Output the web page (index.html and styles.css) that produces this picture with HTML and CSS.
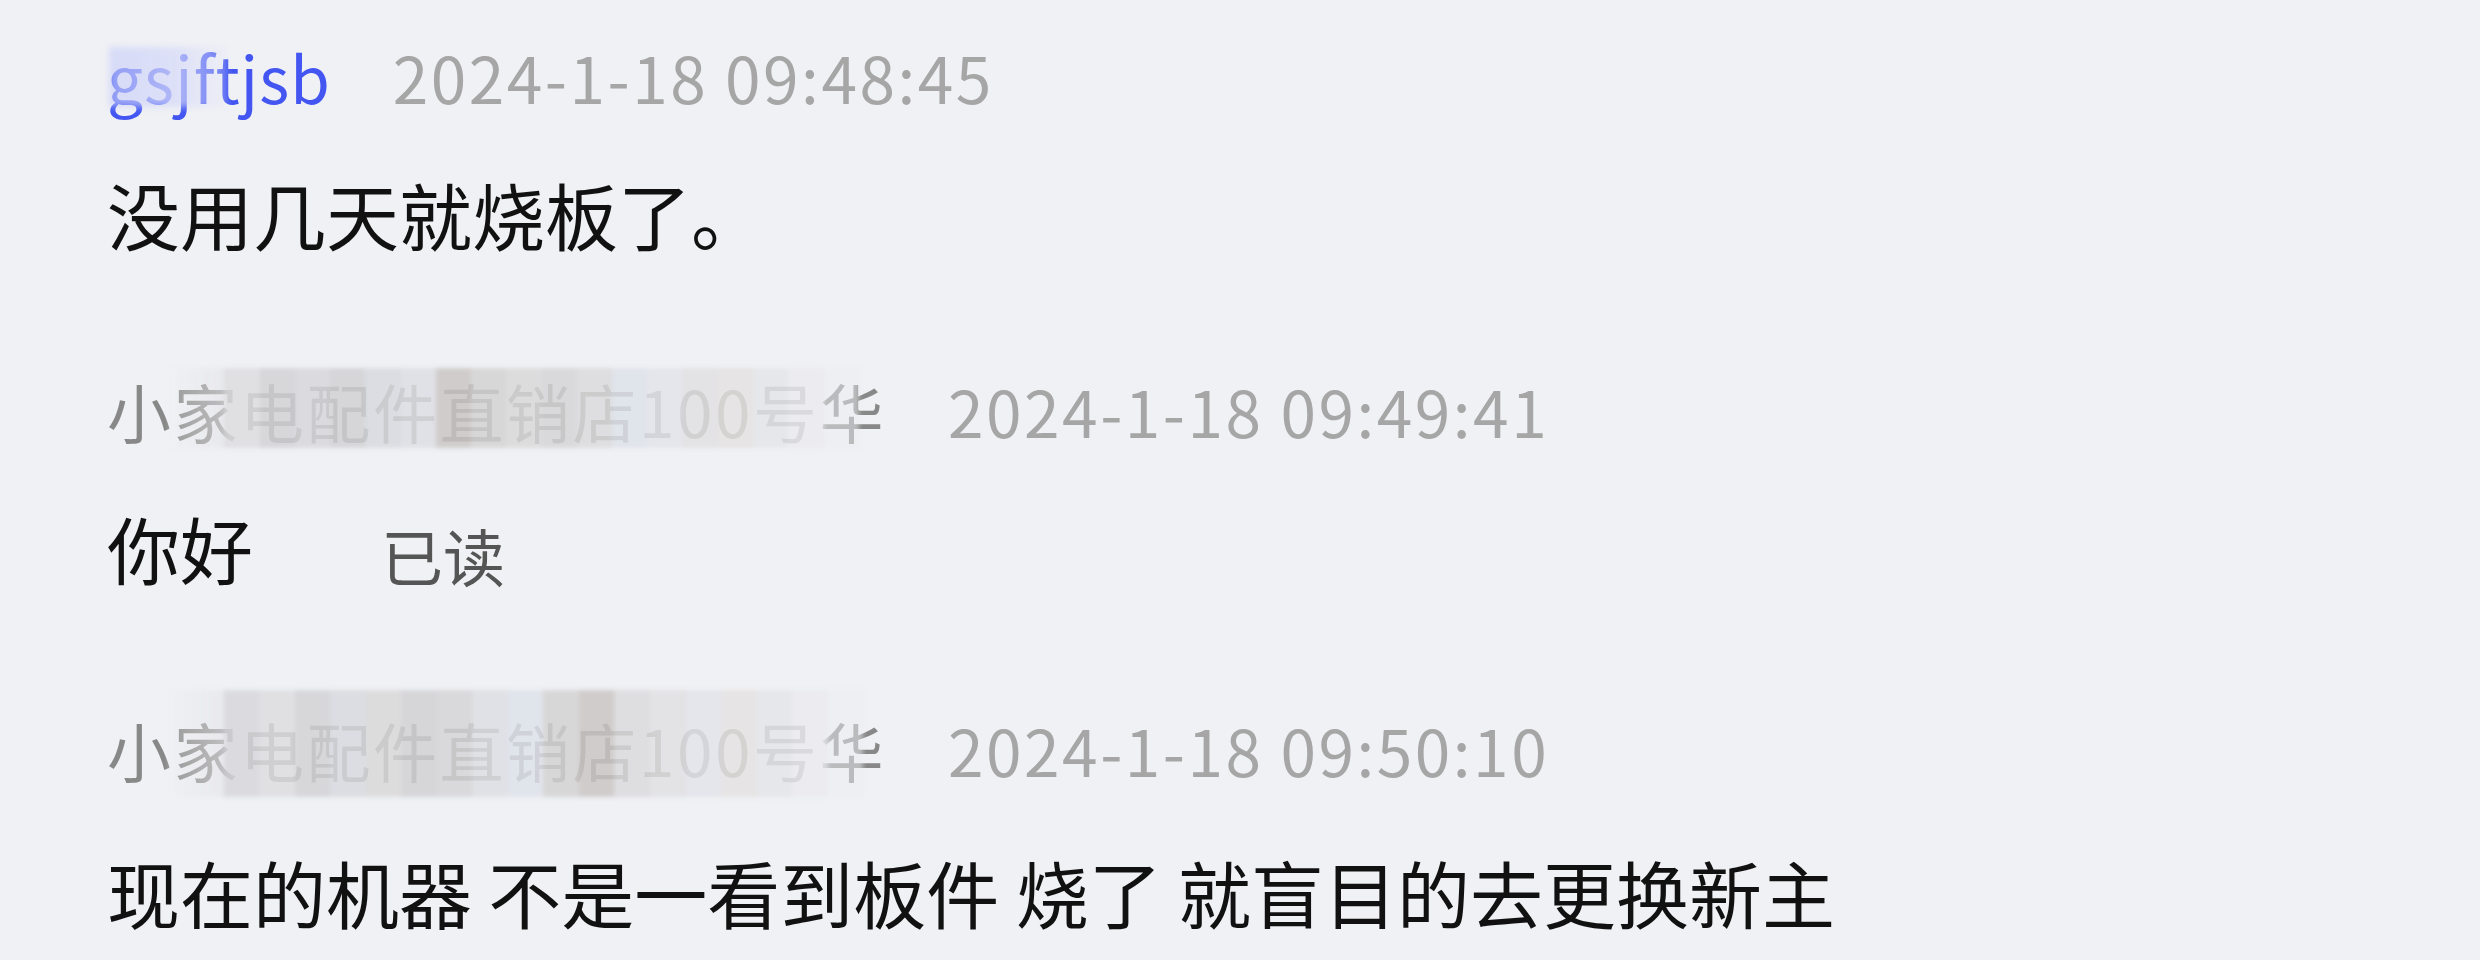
FILE: index.html
```html
<!DOCTYPE html>
<html lang="zh-CN">
<head>
<meta charset="utf-8">
<title>评论</title>
<link rel="stylesheet" href="styles.css">
</head>
<body>
<div class="thread">
  <div class="msg">
    <div class="meta">
      <span class="name name-blue">gsjftjsb<span class="mask mask-blue"></span></span>
      <span class="time">2024-1-18 09:48:45</span>
    </div>
    <div class="body">没用几天就烧板了。</div>
  </div>

  <div class="msg">
    <div class="meta">
      <span class="name name-gray">小家电配件直销店100号华<span class="mask mosaic"><i class="c0"></i><i class="c1"></i><i class="c2"></i><i class="c3"></i><i class="c4"></i><i class="c5"></i><i class="c6"></i><i class="c7"></i><i class="c8"></i><i class="c9"></i><i class="c10"></i><i class="c11"></i><i class="c12"></i><i class="c13"></i><i class="c14"></i><i class="c15"></i><i class="c16"></i><i class="c17"></i><i class="c18"></i></span></span>
      <span class="time">2024-1-18 09:49:41</span>
    </div>
    <div class="body body-row"><span>你好</span><span class="read">已读</span></div>
  </div>

  <div class="msg">
    <div class="meta">
      <span class="name name-gray">小家电配件直销店100号华<span class="mask mosaic mosaic-b"><i class="c0"></i><i class="c3"></i><i class="c1"></i><i class="c2"></i><i class="c5"></i><i class="c9"></i><i class="c4"></i><i class="c10"></i><i class="c6"></i><i class="c12"></i><i class="c8"></i><i class="c7"></i><i class="c11"></i><i class="c14"></i><i class="c13"></i><i class="c15"></i><i class="c16"></i><i class="c17"></i><i class="c18"></i></span></span>
      <span class="time">2024-1-18 09:50:10</span>
    </div>
    <div class="body body-wrap">现在的机器 不是一看到板件 烧了 就盲目的去更换新主板。</div>
  </div>
</div>
</body>
</html>
```

FILE: styles.css
```css
html, body {
  margin: 0;
  padding: 0;
  background: #f0f1f5;
  height: 100%;
  overflow: hidden;
}

body {
  font-family: "Noto Sans CJK SC", "Noto Sans", sans-serif;
  color: #111111;
}

.thread {
  padding: 31px 0 0 107px;
  display: flex;
  flex-direction: column;
}

.msg {
  display: flex;
  flex-direction: column;
  margin-bottom: 104px;
}

.meta {
  display: flex;
  align-items: center;
  gap: 62px;
  height: 90px;
  margin-bottom: 44px;
  font-size: 64px;
  line-height: 90px;
  letter-spacing: 2.5px;
}

.name {
  position: relative;
  white-space: nowrap;
}

.name-blue {
  color: #4356f2;
  letter-spacing: 1px;
}

.name-gray {
  color: #888888;
}

.time {
  color: #a6a6a6;
  white-space: nowrap;
}

.mask {
  position: absolute;
  pointer-events: none;
}

.mask-blue {
  left: 2px;
  top: 16px;
  width: 118px;
  height: 60px;
  background: linear-gradient(90deg, rgba(198, 204, 248, 0.6), rgba(214, 218, 248, 0.75) 55%, rgba(232, 234, 248, 0.25));
  filter: blur(3px);
}

.mosaic {
  left: 61px;
  top: 3px;
  width: 691px;
  height: 80px;
  display: flex;
  filter: blur(2px);
}

.mosaic-b {
  left: 60px;
  top: -14px;
  height: 107px;
  width: 696px;
}

.mosaic i {
  flex: 1;
  opacity: 0.84;
}

.mosaic i.c0 { flex: 1.6; }

.c0 { background: linear-gradient(90deg, rgba(240, 241, 245, 0.2), rgba(228, 228, 231, 0.7)); }
.c1 { background: #dcdcdf; }
.c2 { background: #d2d2d4; }
.c3 { background: #d6d7da; }
.c4 { background: #d0d0d3; }
.c5 { background: #d7d9de; }
.c6 { background: #dcdee2; }
.c7 { background: #c9c5c3; }
.c8 { background: #d3d2d2; }
.c9 { background: #d9d8d8; }
.c10 { background: #d4d3d4; }
.c11 { background: #dad9da; }
.c12 { background: #dde1e8; }
.c13 { background: #e2e4e9; }
.c14 { background: #e0dfe0; }
.c15 { background: #e3e1e0; }
.c16 { background: #e4e5e8; }
.c17 { background: #e9eaee; }
.c18 { background: rgba(236, 238, 242, 0.6); }

.body {
  font-size: 73px;
  line-height: 96px;
  color: #111111;
}

.body-row {
  display: flex;
  align-items: baseline;
  gap: 128px;
}

.read {
  font-size: 62px;
  color: #555555;
  position: relative;
  top: 3px;
}

.body-wrap {
  width: 1760px;
  line-height: 106px;
}
```
